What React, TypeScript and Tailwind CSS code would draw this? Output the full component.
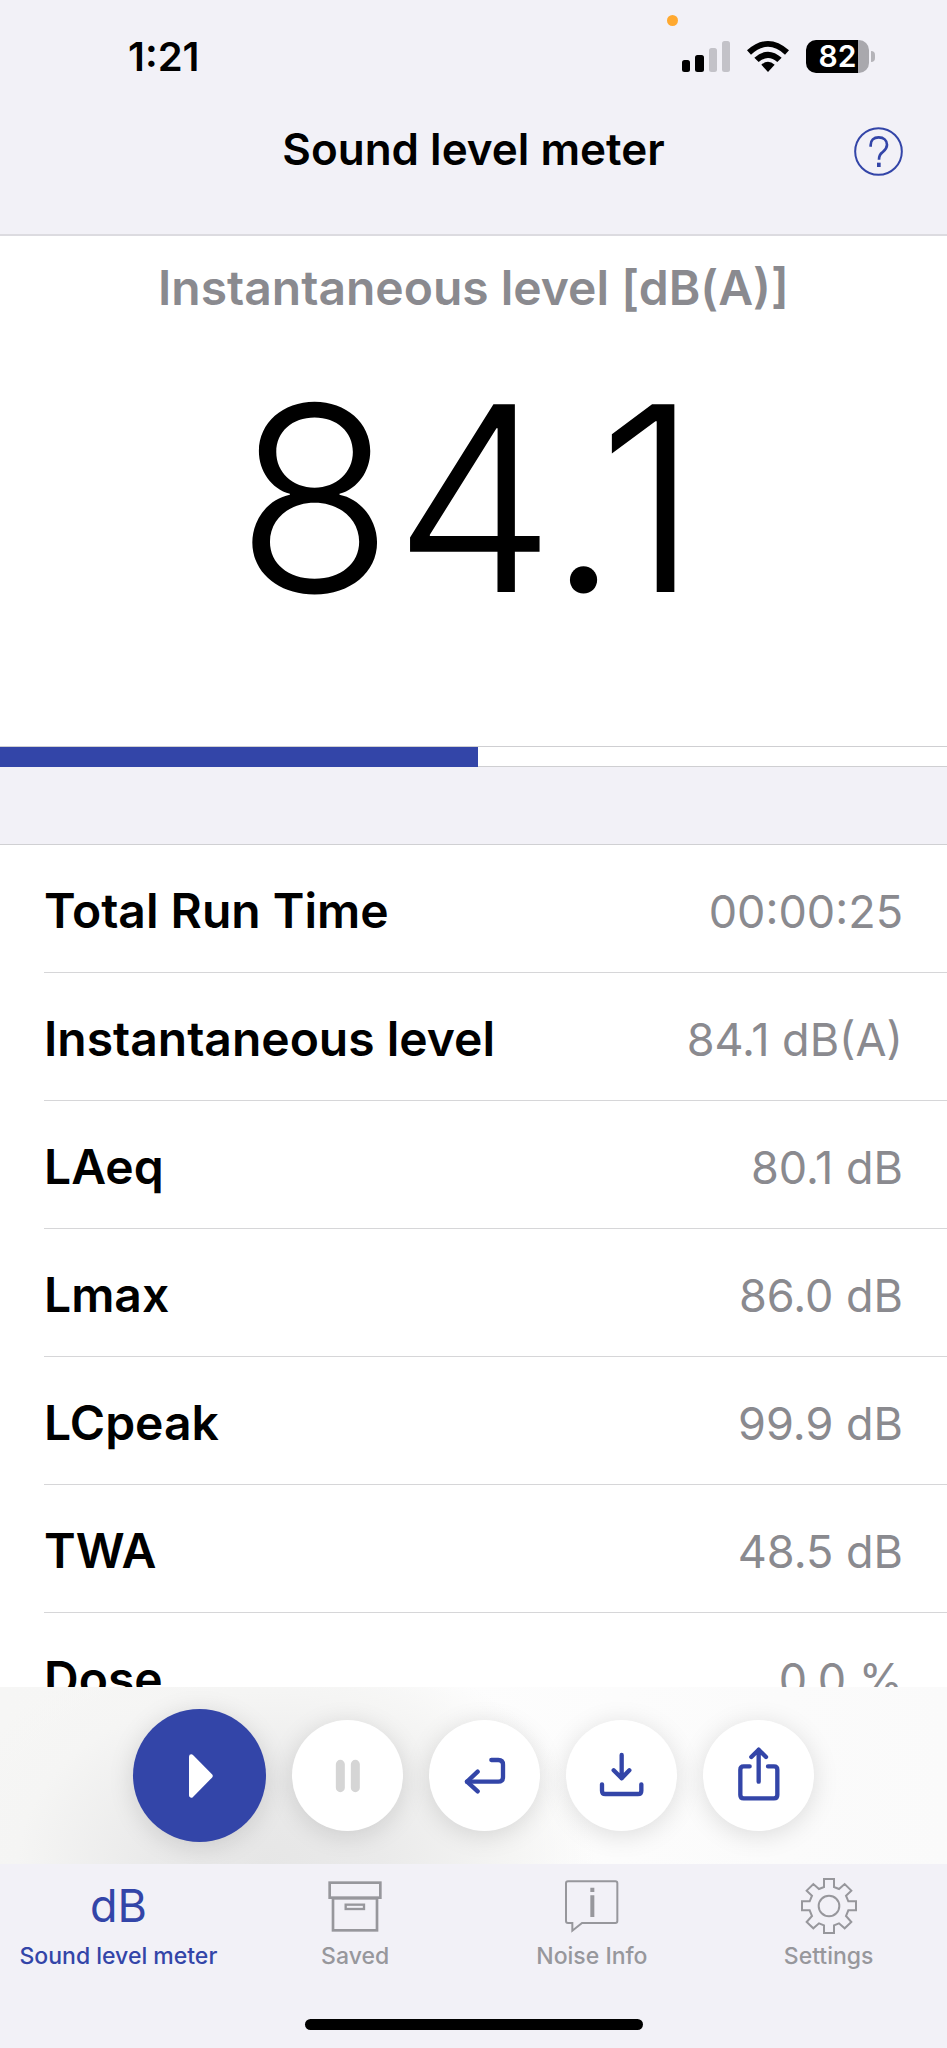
import { useState } from "react";
import type { ReactNode } from "react";
import clsx from "clsx";

const readings = [
  { label: "Total Run Time", value: "00:00:25" },
  { label: "Instantaneous level", value: "84.1 dB(A)" },
  { label: "LAeq", value: "80.1 dB" },
  { label: "Lmax", value: "86.0 dB" },
  { label: "LCpeak", value: "99.9 dB" },
  { label: "TWA", value: "48.5 dB" },
  { label: "Dose", value: "0.0 %" },
];

function StatusBar() {
  return (
    <div className="relative flex h-[114px] items-center justify-between pr-[72px] pl-32">
      <span className="absolute top-[15px] right-[269px] h-[11px] w-[11px] rounded-full bg-[#ffa930]" />
      <span className="text-[40px] font-semibold">1:21</span>
      <div className="flex items-center gap-[17px] pb-0.5">
        <svg className="h-[31px] w-12" viewBox="0 0 48 31" aria-label="Signal">
          <rect x="0" y="19" width="8" height="12" rx="2.5" />
          <rect x="13" y="14" width="9" height="17" rx="2.5" />
          <rect x="27" y="7" width="8" height="24" rx="2.5" fill="#c3c2c8" />
          <rect x="40" y="0" width="8" height="31" rx="2.5" fill="#c3c2c8" />
        </svg>
        <svg className="h-[31px] w-[42px]" viewBox="0 0 126 93" aria-label="Wi-Fi">
          <path d="M0 28 Q63 -28 126 28 L114 41 Q63 -6 12 41 Z" />
          <path d="M22 50 Q63 14 104 50 L91 63 Q63 39 35 63 Z" />
          <path d="M43 71 Q63 54 83 71 L63 93 Z" />
        </svg>
        <div className="flex items-center gap-0.5">
          <div className="flex h-[33px] w-[63px] items-center justify-center rounded-[10px] bg-gradient-to-r from-black from-82% to-[#a9a8ad] to-82% text-[30px] leading-8 font-semibold text-white">
            82
          </div>
          <span className="h-[11px] w-1 rounded-r-full bg-[#b5b4b9]" />
        </div>
      </div>
    </div>
  );
}

function TopBar() {
  return (
    <header className="border-b-2 border-[#dcdbe0] bg-[#f2f1f7]">
      <StatusBar />
      <div className="grid h-[120px] grid-cols-[1fr_auto_1fr] items-start px-11 pt-1.5">
        <h1 className="col-start-2 text-[44px] leading-[58px] font-semibold">Sound level meter</h1>
        <button aria-label="Help" className="mt-[7px] justify-self-end text-[#3345a8]">
          <svg className="size-[49px]" viewBox="0 0 147 147" fill="none" stroke="currentColor">
            <circle cx="73.5" cy="73.5" r="70" strokeWidth="6" />
            <path d="M50 59 V54 C50 40 59 31 74 31 C89 31 99 40 99 53 C99 65 92 70 85 76 C77 82 75 87 75 98" strokeWidth="8" />
            <rect x="69" y="107" width="11" height="13" fill="currentColor" stroke="none" />
          </svg>
        </button>
      </div>
    </header>
  );
}

function LevelPanel({ level, percent }: { level: string; percent: number }) {
  return (
    <section className="bg-white">
      <div className="flex h-[510px] flex-col items-center pt-5">
        <h2 className="text-[48px] leading-[64px] font-semibold text-[#8a8a8f]">Instantaneous level [dB(A)]</h2>
        <p className="mt-12 pr-3 text-[258px] leading-[260px] font-light">{level}</p>
      </div>
      <div
        role="meter"
        aria-label="Instantaneous level"
        aria-valuemin={0}
        aria-valuemax={100}
        aria-valuenow={percent}
        className="h-[21px] border-y border-[#cfcfd2]"
      >
        <div className="h-[20px] bg-[#3345a8]" style={{ width: `${percent}%` }} />
      </div>
    </section>
  );
}

function RoundButton({ label, disabled, children }: { label: string; disabled?: boolean; children: ReactNode }) {
  return (
    <button
      aria-label={label}
      disabled={disabled}
      className="flex size-[111px] items-center justify-center rounded-full bg-white text-[#3345a8] shadow-[0_4px_26px_rgba(0,0,0,0.13)] disabled:text-[#d5d5d5]"
    >
      <svg
        className="size-[60px]"
        viewBox="0 0 180 180"
        fill="none"
        stroke="currentColor"
        strokeWidth="13"
        strokeLinecap="round"
        strokeLinejoin="round"
      >
        {children}
      </svg>
    </button>
  );
}

function Controls() {
  return (
    <div className="flex h-[177px] shrink-0 items-center justify-center gap-[26px] bg-[#fcfcfc] bg-[radial-gradient(ellipse_330px_230px_at_28%_100%,#e6e6e6_0%,#eaeaea_35%,#f5f5f4_75%,transparent_100%),linear-gradient(to_right,#f6f6f5,#f7f7f6_30%,#fdfdfd_48%,#fafafa)]">
      <button
        aria-label="Start"
        className="flex size-[133px] items-center justify-center rounded-full bg-[#3345a8] text-white shadow-[0_4px_26px_rgba(0,0,0,0.13)]"
      >
        <svg className="size-[60px]" viewBox="0 0 180 180">
          <path
            d="M64 32 L121 90 L64 148 Z"
            fill="currentColor"
            stroke="currentColor"
            strokeWidth="14"
            strokeLinejoin="round"
          />
        </svg>
      </button>
      <RoundButton label="Pause" disabled>
        <path d="M67 55 V125 M112 55 V125" strokeWidth="27" />
      </RoundButton>
      <RoundButton label="Reset">
        <path d="M109 42 H130 Q144 42 144 56 V93 Q144 107 130 107 H36" />
        <path d="M68 77 L36 107 L68 136" />
      </RoundButton>
      <RoundButton label="Save">
        <path d="M89 27 V97 M65 73 L89 97 L112 73" />
        <path d="M30 115 V134 Q30 144 40 144 H138 Q148 144 148 134 V115" />
      </RoundButton>
      <RoundButton label="Share">
        <path d="M89 107 V11 M67 33 L89 11 L111 33" />
        <path d="M62 61 H44 Q34 61 34 71 V147 Q34 157 44 157 H135 Q145 157 145 147 V71 Q145 61 135 61 H117" />
      </RoundButton>
    </div>
  );
}

const tabs = [
  { label: "Sound level meter", icon: <span className="text-[45px] leading-[56px]">dB</span> },
  {
    label: "Saved",
    icon: (
      <svg className="size-14" viewBox="0 0 168 168" fill="none" stroke="currentColor" strokeWidth="8">
        <rect x="8" y="14" width="152" height="45" />
        <rect x="18" y="61" width="132" height="96" />
        <rect x="56" y="80" width="55" height="13" strokeWidth="7" />
      </svg>
    ),
  },
  {
    label: "Noise Info",
    icon: (
      <svg className="size-14" viewBox="0 0 168 168" fill="none" stroke="currentColor" strokeWidth="6">
        <path d="M12 10 H154 Q160 10 160 16 V129 Q160 135 154 135 H54 L25 158 V135 H12 Q6 135 6 129 V16 Q6 10 12 10 Z" />
        <path d="M85 29 V42 M85 52 V117" strokeWidth="12" />
      </svg>
    ),
  },
  {
    label: "Settings",
    icon: (
      <svg className="size-14" viewBox="-84 -84 168 168" fill="none" stroke="currentColor" strokeWidth="6">
        <circle r="31" />
        <path d="M-15 -81 H15 V-57 L30 -51 L47 -66 L67 -46 L51 -31 L58 -14 H81 V13 H58 L51 30 L67 48 L47 67 L30 52 L15 58 V81 H-15 V58 L-30 52 L-47 67 L-67 48 L-51 30 L-58 13 H-81 V-14 H-58 L-51 -31 L-67 -46 L-47 -66 L-30 -51 L-15 -57 Z" />
      </svg>
    ),
  },
];

function TabBar() {
  const [active, setActive] = useState(0);

  return (
    <footer className="flex h-[184px] shrink-0 flex-col items-center justify-between bg-[#f2f1f7] pt-[14px] pb-[18px]">
      <nav className="grid w-full grid-cols-4">
        {tabs.map((tab, i) => (
          <button
            key={tab.label}
            onClick={() => setActive(i)}
            className={clsx(
              "flex flex-col items-center gap-2 whitespace-nowrap",
              i === active ? "text-[#3345a8]" : "text-[#97979c]"
            )}
          >
            {tab.icon}
            <span className="text-[23px] leading-7 font-medium">{tab.label}</span>
          </button>
        ))}
      </nav>
      <span className="h-[11px] w-[338px] rounded-full bg-black" />
    </footer>
  );
}

export default function App() {
  return (
    <div className="flex h-screen flex-col bg-[#f2f1f7] font-['Inter',sans-serif] text-black">
      <TopBar />
      <main className="min-h-0 flex-1 overflow-y-auto [scrollbar-width:none]">
        <LevelPanel level="84.1" percent={50.5} />
        <dl className="mt-[77px] border-t border-[#d0d0d3] bg-white pl-11">
          {readings.map((r) => (
            <div
              key={r.label}
              className="flex h-32 items-baseline justify-between border-b border-[#d6d6d8] pr-11 leading-[132px]"
            >
              <dt className="text-[48px] font-semibold">{r.label}</dt>
              <dd className="text-[45px] text-[#8a8a8f]">{r.value}</dd>
            </div>
          ))}
        </dl>
      </main>
      <Controls />
      <TabBar />
    </div>
  );
}
